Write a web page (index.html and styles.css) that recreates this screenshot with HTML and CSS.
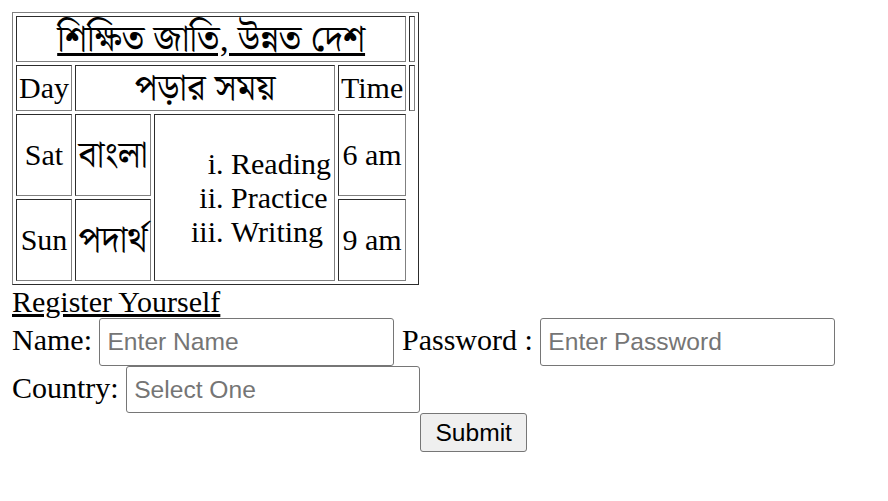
FILE: index.html
```html
<!DOCTYPE html>
<html lang="bn">
<head>
<meta charset="utf-8">
<title>শিক্ষিত জাতি, উন্নত দেশ</title>
<link rel="stylesheet" href="styles.css">
</head>
<body>
<table class="routine">
  <tr class="row-short">
    <td colspan="4" class="title bn"><u>শিক্ষিত জাতি, উন্নত দেশ</u></td>
    <td class="empty"></td>
  </tr>
  <tr class="row-short">
    <td class="c-day">Day</td>
    <td colspan="2" class="bn">পড়ার সময়</td>
    <td class="c-time">Time</td>
    <td class="empty"></td>
  </tr>
  <tr class="row-tall">
    <td class="c-day">Sat</td>
    <td class="c-sub bn">বাংলা</td>
    <td rowspan="2" class="c-list">
      <ol class="steps">
        <li>Reading</li>
        <li>Practice</li>
        <li>Writing</li>
      </ol>
    </td>
    <td class="c-time">6 am</td>
  </tr>
  <tr class="row-tall">
    <td class="c-day">Sun</td>
    <td class="c-sub bn">পদার্থ</td>
    <td class="c-time">9 am</td>
  </tr>
</table>

<form class="reg">
  <div class="reg-title"><u>Register Yourself</u></div>
  <div class="field-row">
    <label for="name">Name:</label>
    <input id="name" class="box" type="text" placeholder="Enter Name">
    <label for="pass">Password :</label>
    <input id="pass" class="box" type="password" placeholder="Enter Password">
  </div>
  <div class="tail">
    <div class="field-row">
      <label for="country">Country:</label>
      <input id="country" class="box box-short" type="text" placeholder="Select One">
    </div>
    <button type="submit" class="submit">Submit</button>
  </div>
</form>
</body>
</html>
```

FILE: styles.css
```css
body {
  margin: 12px;
  font-family: "Liberation Serif", "Noto Serif Bengali", "Noto Sans Bengali", "Lohit Bengali", serif;
  font-size: 30px;
  color: #000;
  background: #fff;
}

.routine {
  border: 1px outset grey;
  border-spacing: 3px;
  border-collapse: separate;
}

.routine td {
  box-sizing: border-box;
  border: 1px inset grey;
  padding: 2px;
  text-align: center;
  vertical-align: middle;
  white-space: nowrap;
  line-height: 34px;
}

.routine td.bn {
  font-size: 36px;
  line-height: 38px;
}

.row-short td { height: 46px; }
.row-tall td { height: 82px; }

.routine td.empty { width: 6px; }
.routine td.c-day { width: 56px; }
.routine td.c-sub { width: 76px; }
.routine td.c-list { width: 181px; text-align: left; }
.routine td.c-time { width: 68px; }

.steps {
  margin: 0;
  padding-left: 74px;
  list-style-type: lower-roman;
  line-height: 34px;
}

.reg-title {
  line-height: 33px;
}

.field-row {
  display: flex;
  align-items: baseline;
  gap: 7.5px;
}

.box {
  box-sizing: border-box;
  width: 295px;
  height: 48px;
  padding: 0 7px;
  margin: 0;
  border: 1px solid #767676;
  border-radius: 3px;
  font-family: "Liberation Sans", Arial, sans-serif;
  font-size: 24.6px;
  color: #000;
  background: #fff;
}

.box::placeholder { color: #757575; }

.box-short { width: 294px; height: 47px; }

.tail {
  display: grid;
  grid-template-columns: auto auto;
  justify-content: start;
}

.submit {
  grid-column: 2;
  grid-row: 2;
  box-sizing: border-box;
  width: 107px;
  height: 39px;
  margin: 0;
  padding: 0;
  border: 1px solid #767676;
  border-radius: 3px;
  background: #efefef;
  font-family: "Liberation Sans", Arial, sans-serif;
  font-size: 24.6px;
  color: #000;
}
```
